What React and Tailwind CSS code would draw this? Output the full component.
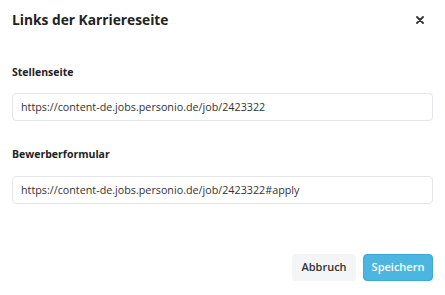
import React from 'react';

export default function App() {
  return (
    <div className="w-[445px] h-[295px] bg-white px-3 flex flex-col font-['Open_Sans',sans-serif] text-[#222]">
      {/* header */}
      <div className="flex items-center justify-between pt-[9px] h-[30px]">
        <h1 className="text-[13.75px] leading-5 font-bold">Links der Karriereseite</h1>
        <button className="mr-[9px] text-[#333]" aria-label="close">
          <svg width="8" height="8" viewBox="0 0 8 8">
            <path d="M1 1L7 7M7 1L1 7" stroke="currentColor" strokeWidth="1.8" strokeLinecap="round" />
          </svg>
        </button>
      </div>

      {/* fields */}
      <label className="mt-[34px] text-[10.5px] leading-4 font-bold">Stellenseite</label>
      <input
        readOnly
        value="https://content-de.jobs.personio.de/job/2423322"
        className="mt-[13px] h-[28px] w-full rounded border border-[#e3e6e9] px-2 text-[10.75px] text-[#333] outline-none"
      />

      <label className="mt-[25px] text-[10.5px] leading-4 font-bold">Bewerberformular</label>
      <input
        readOnly
        value="https://content-de.jobs.personio.de/job/2423322#apply"
        className="mt-[14px] h-[28px] w-full rounded border border-[#e3e6e9] px-2 text-[10.75px] text-[#333] outline-none"
      />

      {/* footer */}
      <div className="mt-[50px] flex justify-end gap-[7px]">
        <button className="h-[27px] w-[64px] rounded bg-[#f3f5f7] text-[11px] font-semibold text-[#333]">
          Abbruch
        </button>
        <button className="h-[27px] w-[70px] rounded border border-[#3ea8d6] bg-[#4cb5e0] text-[11px] font-semibold text-white">
          Speichern
        </button>
      </div>
    </div>
  );
}
